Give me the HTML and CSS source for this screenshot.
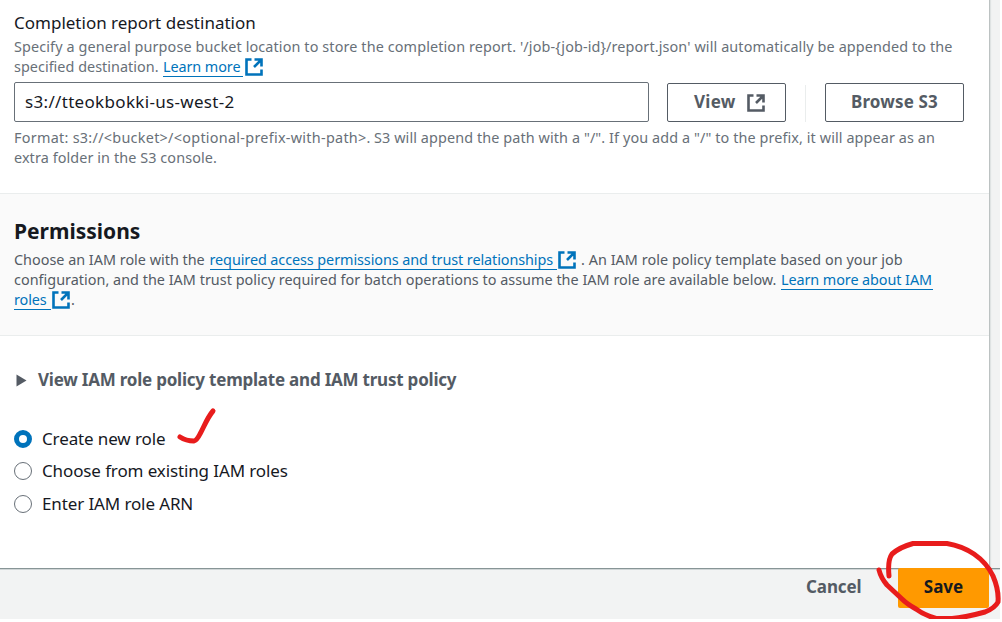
FILE: index.html
```html
<!DOCTYPE html>
<html lang="en">
<head>
<meta charset="utf-8">
<title>Create job</title>
<link rel="stylesheet" href="styles.css">
</head>
<body>
<svg class="sprite" aria-hidden="true">
  <symbol id="external" viewBox="0 0 18 18">
    <path d="M6.5 1.5H1.5v15h15v-5M9.5 1.5h7v7M16 2l-7 7" fill="none" stroke="currentColor" stroke-width="2.6"/>
  </symbol>
</svg>
<div class="page">
  <main class="panel">
    <section class="destination">
      <label class="label">Completion report destination</label>
      <div class="hint">
        <div class="line l1">Specify a general purpose bucket location to store the completion report. '/job-{job-id}/report.json' will automatically be appended to the</div>
        <div class="line"><span class="l2">specified destination.</span><a class="link more">Learn more</a><svg class="icon"><use href="#external"/></svg></div>
      </div>
      <div class="field-row">
        <div class="input">s3://tteokbokki-us-west-2</div>
        <div class="button view">View<svg class="icon"><use href="#external"/></svg></div>
        <div class="divider"></div>
        <div class="button browse">Browse S3</div>
      </div>
      <div class="hint format">
        <div class="line"><span class="pattern">Format: s3://&lt;bucket&gt;/&lt;optional-prefix-with-path&gt;.</span><span class="l3">S3 will append the path with a "/". If you add a "/" to the prefix, it will appear as an</span></div>
        <div class="line l4">extra folder in the S3 console.</div>
      </div>
    </section>
    <section class="permissions">
      <h2 class="heading">Permissions</h2>
      <div class="description">
        <div class="line"><span class="l5">Choose an IAM role with the</span><a class="link required">required access permissions and trust relationships</a><svg class="icon"><use href="#external"/></svg><span class="l6">. An IAM role policy template based on your job</span></div>
        <div class="line"><span class="l7">configuration, and the IAM trust policy required for batch operations to assume the IAM role are available below.</span><a class="link about">Learn more about IAM</a></div>
        <div class="line"><a class="link roles">roles</a><svg class="icon"><use href="#external"/></svg><span class="stop">.</span></div>
      </div>
    </section>
    <section class="role">
      <div class="expander"><svg class="caret" viewBox="0 0 11 13"><path d="M0.5 0.5L10.5 6.5L0.5 12.5z" fill="currentColor"/></svg>View IAM role policy template and IAM trust policy</div>
      <div class="options">
        <div class="option o1"><span class="radio checked"></span>Create new role</div>
        <div class="option o2"><span class="radio"></span>Choose from existing IAM roles</div>
        <div class="option o3"><span class="radio"></span>Enter IAM role ARN</div>
      </div>
    </section>
  </main>
  <footer class="footer">
    <div class="cancel">Cancel</div>
    <div class="save">Save</div>
  </footer>
  <svg class="ink" viewBox="0 0 1002 622">
    <path d="M180 437Q186 441 194 441Q197 440 200 434C204 427 207 418 213 411"/>
    <path d="M889 576C888 566 889 558 892 554Q900 547 913 543.5H947Q962 546 974 554Q987 563 993 576Q999 590 998 602Q995 608 985 612C974 615 962 618 952 618.5H936Q924 615 916 609Q907 604 902 599L887 585Q881 578 879 570"/>
  </svg>
</div>
</body>
</html>
```
FILE: styles.css
```css
* { box-sizing: border-box; }
body {
  margin: 0;
  background: #fff;
  color: #16191f;
  font: 17px/22px "Noto Sans", sans-serif;
}
.sprite { position: absolute; width: 0; height: 0; }
.page {
  position: relative;
  width: 1000px;
  height: 619px;
  background: #f2f3f3;
}
.panel {
  width: 990px;
  height: 568px;
  background: #fff;
  border-right: 1px solid #bcc2c2;
  box-shadow: 1px 0 1px #dfe3e3;
}
.destination { height: 193px; padding: 12px 14px 0; }
.label { display: block; height: 25px; white-space: nowrap; }
.hint, .description { font-size: 14.4px; line-height: 20px; color: #687078; }
.description { color: #545b64; }
.line { display: flex; height: 20px; white-space: nowrap; }
.l1 { letter-spacing: .115px; }
.l2 { width: 149px; letter-spacing: .03px; }
.pattern { width: 360px; letter-spacing: .28px; }
.l3 { letter-spacing: .1px; }
.l4 { letter-spacing: .09px; }
.l5 { width: 195.5px; }
.l6 { margin-left: 5px; letter-spacing: .05px; }
.l7 { width: 767px; letter-spacing: .02px; }
.link { height: 20px; color: #0073bb; border-bottom: 1px solid #0073bb; letter-spacing: -.08px; }
.more { width: 80px; }
.required { width: 347.5px; }
.about { width: 152px; }
.roles { width: 37px; }
.icon { flex: none; width: 18px; height: 18px; margin: 1px 0 0 2px; color: #0073bb; }
.description .icon { margin-left: 1px; }
.stop { margin-left: 1px; }
.field-row { display: flex; align-items: flex-end; height: 45px; }
.input {
  width: 635px;
  height: 40px;
  padding: 0 10px;
  border: 1px solid #687078;
  border-radius: 2px;
  line-height: 38px;
  letter-spacing: .32px;
}
.button {
  display: flex;
  height: 39px;
  padding-left: 26px;
  border: 1px solid #545b64;
  border-radius: 2px;
  color: #545b64;
  font-weight: 700;
  line-height: 36px;
  white-space: nowrap;
}
.view { width: 119px; margin-left: 18px; letter-spacing: .25px; }
.view .icon { margin: 10px 0 0 11px; color: #545b64; }
.divider { width: 1px; height: 37px; margin: 0 19px; background: #eaeded; }
.browse { width: 139px; padding-left: 25px; letter-spacing: .15px; }
.format { padding-top: 6px; }
.permissions {
  height: 143px;
  padding: 25px 14px 0;
  background: #fafafa;
  border-top: 1px solid #eaeded;
  border-bottom: 1px solid #eaeded;
}
.heading { height: 31px; margin: 0; font-size: 21px; line-height: 24px; }
.role { padding: 33px 14px 0; }
.expander {
  display: flex;
  align-items: center;
  color: #545b64;
  font-weight: 700;
  letter-spacing: -.22px;
  white-space: nowrap;
}
.caret { width: 11px; height: 13px; margin: 0 11px 0 2px; }
.options { padding-top: 32px; }
.option {
  display: flex;
  align-items: center;
  gap: 10px;
  height: 32px;
  letter-spacing: -.12px;
}
.o3 { height: 34px; }
.radio { width: 18px; height: 18px; border: 1px solid #687078; border-radius: 50%; }
.checked { border: 5.5px solid #0073bb; }
.footer {
  display: flex;
  height: 51px;
  justify-content: flex-end;
  padding-right: 11px;
  border-top: 1px solid #879596;
  box-shadow: inset 0 1px #cfd5d6;
  font-weight: 700;
}
.cancel { width: 92px; padding-top: 7px; color: #545b64; letter-spacing: -.1px; }
.save {
  width: 91px;
  height: 40px;
  margin-top: -1px;
  border-radius: 2px;
  background: #ff9900;
  line-height: 38px;
  text-align: center;
}
.ink {
  position: absolute;
  top: 0;
  left: 0;
  width: 1002px;
  height: 622px;
  fill: none;
  stroke: #e81c1c;
  stroke-width: 5;
  stroke-linecap: round;
  stroke-linejoin: round;
}
```
